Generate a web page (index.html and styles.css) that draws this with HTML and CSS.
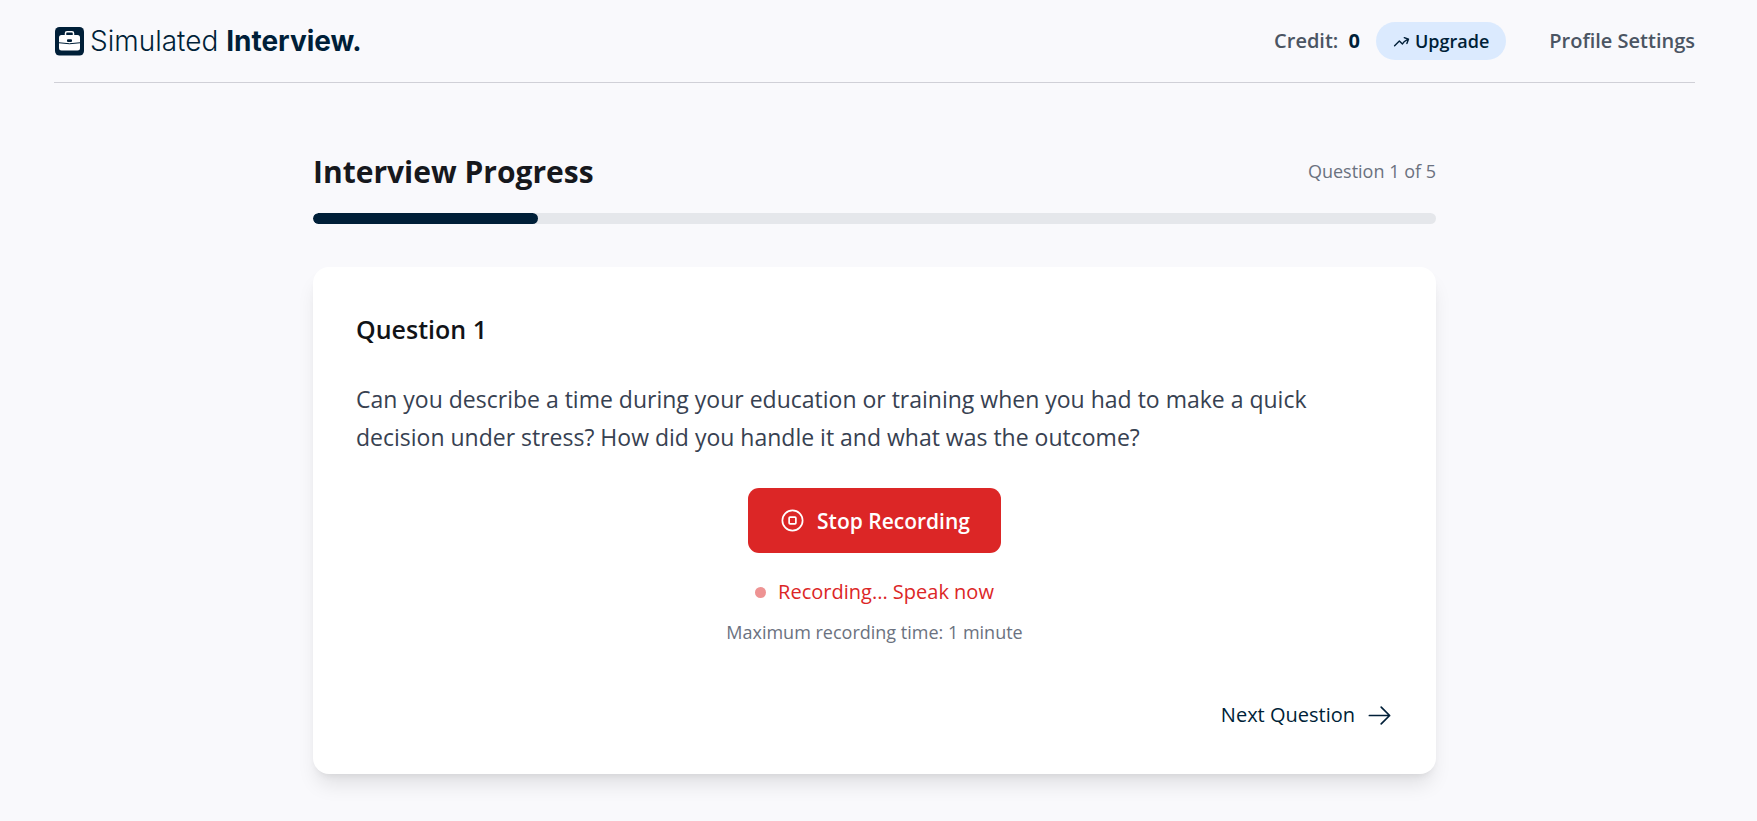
FILE: index.html
```html
<!DOCTYPE html>
<html lang="en">
<head>
<meta charset="utf-8">
<meta name="viewport" content="width=device-width, initial-scale=1">
<title>Simulated Interview</title>
<link rel="stylesheet" href="styles.css">
</head>
<body>
<header class="header">
  <a class="logo" href="#">
    <svg class="logo-icon" viewBox="0 0 30 30" aria-hidden="true">
      <rect x="1" y="1" width="29" height="28.500" rx="4.500" fill="#001f38"/>
      <path d="M11.500 10V7.200a1.500 1.500 0 0 1 1.500-1.500h5a1.500 1.500 0 0 1 1.500 1.500V10" fill="none" stroke="#fff" stroke-width="1.500"/>
      <rect x="5" y="9" width="21" height="15.500" rx="2.500" fill="#fff"/>
      <path d="M5 16.800Q15.500 18.800 26 16.800" fill="none" stroke="#001f38" stroke-width="1"/>
      <rect x="13" y="13.300" width="5" height="2.600" rx="1" fill="#001f38"/>
    </svg>
    <span class="logo-text">Simulated <b>Interview.</b></span>
  </a>
  <nav class="nav">
    <div class="credit">Credit: <strong class="credit-count">0</strong></div>
    <button class="upgrade" type="button">
      <svg class="upgrade-icon" viewBox="0 0 24 24" aria-hidden="true"><path d="M2.250 18 9 11.250l4.306 4.306a11.950 11.950 0 0 1 5.814-5.518l2.740-1.220m0 0-5.940-2.281m5.940 2.280-2.280 5.941"/></svg>
      Upgrade
    </button>
    <a class="profile" href="#">Profile Settings</a>
  </nav>
</header>
<main class="main">
  <div class="progress-head">
    <h1 class="title">Interview Progress</h1>
    <span class="count">Question 1 of 5</span>
  </div>
  <div class="track" role="progressbar" aria-label="Interview progress" aria-valuemin="0" aria-valuemax="5" aria-valuenow="1">
    <div class="fill" style="width:20%"></div>
  </div>
  <section class="card">
    <h2 class="question-title">Question 1</h2>
    <p class="question">Can you describe a time during your education or training when you had to make a quick decision under stress? How did you handle it and what was the outcome?</p>
    <div class="recorder">
      <button class="stop" type="button">
        <svg class="icon" viewBox="0 0 24 24" aria-hidden="true"><circle cx="12" cy="12" r="9"/><rect x="9" y="9" width="6" height="6" rx="0.800"/></svg>
        Stop Recording
      </button>
      <div class="status"><span class="dot"></span>Recording... Speak now</div>
      <p class="limit">Maximum recording time: 1 minute</p>
    </div>
    <div class="actions">
      <button class="next" type="button">
        Next Question
        <svg class="icon" viewBox="0 0 24 24" aria-hidden="true"><path d="M13.500 4.500 21 12m0 0-7.500 7.500M21 12H3"/></svg>
      </button>
    </div>
  </section>
</main>
</body>
</html>
```
FILE: styles.css
```css
* { box-sizing: border-box; }

body {
  margin: 0;
  padding: 0 62px 0 54px;
  background: #f9f9fc;
  color: #111827;
  font-family: "Open Sans", "Noto Sans", sans-serif;
}

h1, h2, p { margin: 0; }

button {
  border: 0;
  background: none;
  font-family: inherit;
  cursor: pointer;
}

a { color: inherit; text-decoration: none; }

svg {
  fill: none;
  stroke: currentColor;
  stroke-width: 1.5;
  stroke-linecap: round;
  stroke-linejoin: round;
}

.header {
  display: flex;
  align-items: center;
  justify-content: space-between;
  height: 83px;
  border-bottom: 1px solid #d0d0d7;
}

.logo {
  display: flex;
  align-items: center;
  gap: 6px;
  color: #001f38;
}

.logo-icon { width: 30px; height: 30px; stroke: none; }

.logo-text {
  font-family: Inter, sans-serif;
  font-size: 28px;
  font-weight: 300;
  line-height: 32px;
}

.logo-text b { font-weight: 700; }

.nav {
  display: flex;
  align-items: center;
  font-size: 20px;
  font-weight: 600;
  line-height: 32px;
  color: #4b5563;
}

.credit { margin-right: 16px; }

.credit-count {
  margin-left: 5px;
  font-weight: 700;
  color: #001f38;
}

.upgrade {
  display: flex;
  align-items: center;
  gap: 5px;
  height: 38px;
  margin-right: 43px;
  padding: 0 17px;
  border-radius: 19px;
  background: #dbeafe;
  color: #001f38;
  font-size: 18px;
  font-weight: 600;
}

.upgrade-icon { width: 17px; height: 17px; stroke-width: 2; }

.main {
  max-width: 1123px;
  margin: 0 auto;
  padding: 67px 0 47px;
}

.progress-head {
  display: flex;
  align-items: center;
  justify-content: space-between;
  margin-bottom: 20px;
}

.title {
  color: #16181d;
  font-size: 30px;
  font-weight: 700;
  line-height: 43px;
}

.count {
  color: #6b7280;
  font-size: 18px;
  line-height: 27px;
}

.track {
  height: 11px;
  margin-bottom: 43px;
  border-radius: 6px;
  background: #e5e7eb;
  overflow: hidden;
}

.fill {
  height: 100%;
  border-radius: 6px;
  background: #001f38;
}

.card {
  padding: 43px;
  border-radius: 16px;
  background: #fff;
  box-shadow: 0 14px 20px -4px rgba(0, 0, 0, 0.1), 0 5px 8px -5px rgba(0, 0, 0, 0.1);
}

.question-title {
  margin-bottom: 32px;
  color: #111317;
  font-size: 25px;
  font-weight: 600;
  line-height: 38px;
}

.question {
  margin-bottom: 32px;
  color: #374151;
  font-size: 23px;
  line-height: 38px;
}

.recorder {
  display: flex;
  flex-direction: column;
  align-items: center;
}

.icon { width: 27px; height: 27px; }

.stop {
  display: flex;
  align-items: center;
  gap: 11px;
  height: 65px;
  margin-bottom: 23px;
  padding: 0 31px;
  border-radius: 11px;
  background: #dc2626;
  color: #fff;
  font-size: 21px;
  font-weight: 600;
}

.status {
  display: flex;
  align-items: center;
  gap: 12px;
  margin-bottom: 11px;
  color: #dc2626;
  font-size: 20px;
  line-height: 32px;
}

.dot {
  width: 11px;
  height: 11px;
  border-radius: 50%;
  background: #ee9393;
}

.limit {
  color: #6b7280;
  font-size: 18px;
  line-height: 27px;
}

.actions {
  display: flex;
  justify-content: flex-end;
  margin-top: 53px;
}

.next {
  display: flex;
  align-items: center;
  gap: 11px;
  padding: 0;
  color: #001f38;
  font-size: 20px;
  line-height: 32px;
}
```
